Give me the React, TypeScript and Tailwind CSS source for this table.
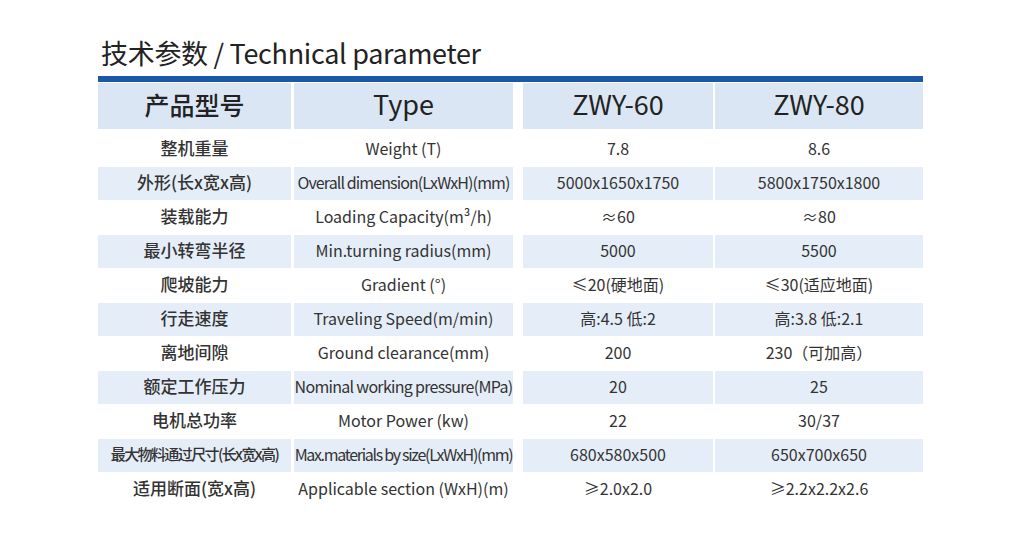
const font = { fontFamily: '"Noto Sans CJK SC", "Noto Sans", sans-serif' };

type Row = {
  zh: string;
  en: string;
  a: string;
  b: string;
  zhCls?: string;
  enCls?: string;
};

const rows: Row[] = [
  { zh: "整机重量", en: "Weight (T)", a: "7.8", b: "8.6" },
  {
    zh: "外形(长x宽x高)",
    en: "Overall dimension(LxWxH)(mm)",
    a: "5000x1650x1750",
    b: "5800x1750x1800",
    enCls: "tracking-[-0.9px]",
  },
  { zh: "装载能力", en: "Loading Capacity(m³/h)", a: "≈60", b: "≈80" },
  { zh: "最小转弯半径", en: "Min.turning radius(mm)", a: "5000", b: "5500" },
  { zh: "爬坡能力", en: "Gradient (°)", a: "≤20(硬地面)", b: "≤30(适应地面)" },
  { zh: "行走速度", en: "Traveling Speed(m/min)", a: "高:4.5 低:2", b: "高:3.8 低:2.1" },
  { zh: "离地间隙", en: "Ground clearance(mm)", a: "200", b: "230（可加高）" },
  {
    zh: "额定工作压力",
    en: "Nominal working pressure(MPa)",
    a: "20",
    b: "25",
    enCls: "tracking-[-0.7px]",
  },
  { zh: "电机总功率", en: "Motor Power (kw)", a: "22", b: "30/37" },
  {
    zh: "最大物料通过尺寸(长x宽x高)",
    en: "Max.materials by size(LxWxH)(mm)",
    a: "680x580x500",
    b: "650x700x650",
    zhCls: "text-[15px] tracking-[-1.6px]",
    enCls: "tracking-[-1.3px]",
  },
  { zh: "适用断面(宽x高)", en: "Applicable section (WxH)(m)", a: "≥2.0x2.0", b: "≥2.2x2.2x2.6" },
];

function Cell({ children, className = "" }: { children: React.ReactNode; className?: string }) {
  return (
    <div className={`flex items-center justify-center whitespace-nowrap pb-[3px] ${className}`}>
      {children}
    </div>
  );
}

export default function App() {
  return (
    <div className="w-[1024px] h-[541px] bg-white text-[#333]" style={font}>
      <div className="pl-[98px] pt-[33px]">
        <h1 className="pl-[3px] text-[27px] leading-[40px] text-[#222] tracking-[-0.3px]">
          技术参数 / Technical parameter
        </h1>
        <div className="mt-[3px] w-[825px] h-[6px] bg-[#1b57a7]" />
        <div className="mt-[1px] w-[825px]">
          <div className="grid grid-cols-[193px_222px_200px_210px] h-[46px] text-[#222]">
            <Cell className="bg-[#dae6f3] text-[25px] font-medium">产品型号</Cell>
            <Cell className="ml-[3px] bg-[#dae6f3] text-[27px]">Type</Cell>
            <Cell className="ml-[10px] bg-[#dae6f3] text-[27px]">ZWY-60</Cell>
            <Cell className="ml-[2px] bg-[#dae6f3] text-[27px]">ZWY-80</Cell>
          </div>
          <div className="mt-[4px] flex flex-col gap-[1px]">
            {rows.map((r, i) => {
              const bg = i % 2 === 1 ? "bg-[#e5eef8]" : "bg-white";
              return (
                <div key={r.zh} className="grid grid-cols-[193px_222px_200px_210px] h-[33px] text-[16px]">
                  <Cell className={`${bg} font-medium ${r.zhCls ?? "text-[17px]"}`}>{r.zh}</Cell>
                  <Cell className={`ml-[3px] ${bg} ${r.enCls ?? ""}`}>{r.en}</Cell>
                  <Cell className={`ml-[10px] ${bg}`}>{r.a}</Cell>
                  <Cell className={`ml-[2px] ${bg}`}>{r.b}</Cell>
                </div>
              );
            })}
          </div>
        </div>
      </div>
    </div>
  );
}
